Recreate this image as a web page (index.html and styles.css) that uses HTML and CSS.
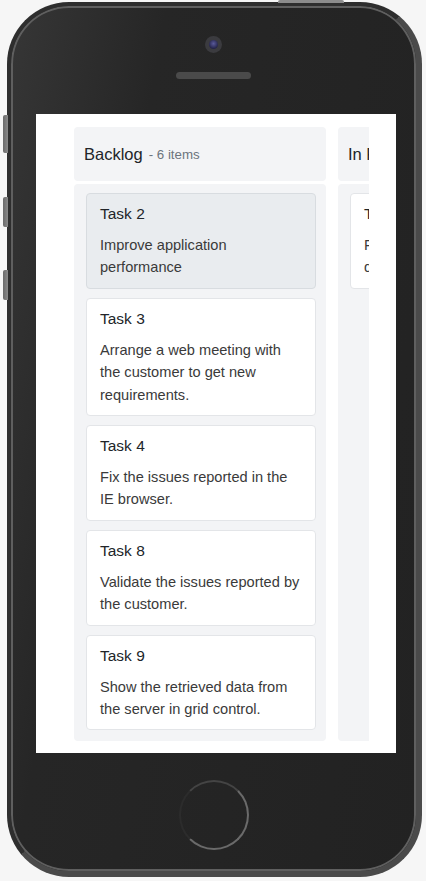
FILE: index.html
```html
<!DOCTYPE html>
<html>
<head>
  <meta charset="UTF-8">
  <title>Kanban - Mobile</title>
  <link rel="stylesheet" href="styles.css">
</head>
<body>
  <div class="phone">
    <span class="side-btn btn-a"></span>
    <span class="side-btn btn-b"></span>
    <span class="side-btn btn-c"></span>
    <span class="top-btn"></span>

    <div class="phone-top">
      <div class="camera"><span></span></div>
      <div class="speaker"></div>
    </div>

    <div class="screen">
      <div class="board">
        <div class="column">
          <div class="col-header">Backlog <span class="count">- 6 items</span></div>
          <div class="col-body">
            <div class="card selected">
              <div class="card-title">Task 2</div>
              <div class="card-text">Improve application performance</div>
            </div>
            <div class="card">
              <div class="card-title">Task 3</div>
              <div class="card-text">Arrange a web meeting with the customer to get new requirements.</div>
            </div>
            <div class="card">
              <div class="card-title">Task 4</div>
              <div class="card-text">Fix the issues reported in the IE browser.</div>
            </div>
            <div class="card">
              <div class="card-title">Task 8</div>
              <div class="card-text">Validate the issues reported by the customer.</div>
            </div>
            <div class="card">
              <div class="card-title">Task 9</div>
              <div class="card-text">Show the retrieved data from the server in grid control.</div>
            </div>
          </div>
        </div>

        <div class="column">
          <div class="col-header">In Progress <span class="count">- 3 items</span></div>
          <div class="col-body">
            <div class="card">
              <div class="card-title">Task 10</div>
              <div class="card-text">Fix cannot open user's default database SQL error.</div>
            </div>
          </div>
        </div>
      </div>
    </div>

    <div class="phone-bottom">
      <div class="home-btn"></div>
    </div>
  </div>
</body>
</html>
```

FILE: styles.css
```css
body {
  margin: 0;
  background: #f6f6f6;
  font-family: "Liberation Sans", Arial, sans-serif;
}

/* phone frame */
.phone {
  position: relative;
  box-sizing: border-box;
  width: 415px;
  height: 875px;
  margin: 2px 0 0 7px;
  border-style: solid;
  border-width: 4px 6px 6px 4px;
  border-color: #2e2e2e #4a4a4a #4a4a4a #2e2e2e;
  border-radius: 62px;
  background: linear-gradient(100deg, #363636 0%, #262626 28%, #222 100%);
  box-shadow: inset 0 0 0 2px #5f5f5f;
  display: flex;
  flex-direction: column;
}
.side-btn {
  position: absolute;
  left: -8px;
  width: 5px;
  border-radius: 2px 0 0 2px;
  background: linear-gradient(90deg, #6a6a6a, #8a8a8a);
}
.btn-a { top: 109px; height: 38px; }
.btn-b { top: 191px; height: 30px; }
.btn-c { top: 264px; height: 30px; }
.top-btn {
  position: absolute;
  top: -6px;
  left: 267px;
  width: 66px;
  height: 3px;
  border-radius: 2px 2px 0 0;
  background: #8c8c8c;
}

.phone-top {
  height: 108px;
  padding-top: 30px;
  box-sizing: border-box;
  display: flex;
  flex-direction: column;
  align-items: center;
}
.camera {
  width: 17px;
  height: 17px;
  border-radius: 50%;
  background: #3b3b3f;
  display: flex;
  align-items: center;
  justify-content: center;
}
.camera span {
  width: 9px;
  height: 9px;
  border-radius: 50%;
  background: radial-gradient(circle at 50% 40%, #5a5a9a 0%, #24244a 70%);
}
.speaker {
  width: 75px;
  height: 7px;
  margin-top: 19px;
  border-radius: 4px;
  background-color: #4a4a4a;
  background-image: radial-gradient(#6e6e6e 35%, transparent 40%);
  background-size: 2px 2px;
}

/* screen */
.screen {
  width: 360px;
  height: 639px;
  margin-left: 25px;
  background: #fff;
  box-sizing: border-box;
  padding: 13px 0 12px 38px;
  display: flex;
}
.board {
  width: 295px;
  overflow: hidden;
  display: flex;
  gap: 12px;
}
.column {
  width: 252px;
  flex-shrink: 0;
  display: flex;
  flex-direction: column;
}
.col-header {
  height: 54px;
  padding-left: 10px;
  display: flex;
  align-items: center;
  white-space: nowrap;
  background: #f3f4f6;
  border-radius: 4px;
  font-size: 16.5px;
  color: #212529;
}
.count {
  margin-left: 6px;
  font-size: 13.3px;
  color: #6c757d;
}
.col-body {
  flex: 1;
  margin-top: 3px;
  padding: 9px 10px 0 12px;
  background: #f3f4f6;
  border-radius: 4px;
  overflow: hidden;
  display: flex;
  flex-direction: column;
  gap: 9px;
}
.card {
  flex-shrink: 0;
  padding: 10px 13px 9px;
  background: #fff;
  border: 1px solid #e3e5e8;
  border-radius: 4px;
}
.card.selected {
  background: #e9ecef;
  border-color: #d8dce0;
}
.card-title {
  font-size: 15.5px;
  line-height: 20px;
  color: #212529;
}
.card-text {
  margin-top: 10px;
  font-size: 14.6px;
  line-height: 22.4px;
  color: #3a3a3a;
}

/* home button */
.phone-bottom {
  flex: 1;
  display: flex;
  justify-content: center;
  padding-top: 27px;
}
.home-btn {
  width: 66px;
  height: 66px;
  border-radius: 50%;
  border: 2px solid;
  border-color: #444 #6a6a6a #6a6a6a #2c2c2c;
}
```
